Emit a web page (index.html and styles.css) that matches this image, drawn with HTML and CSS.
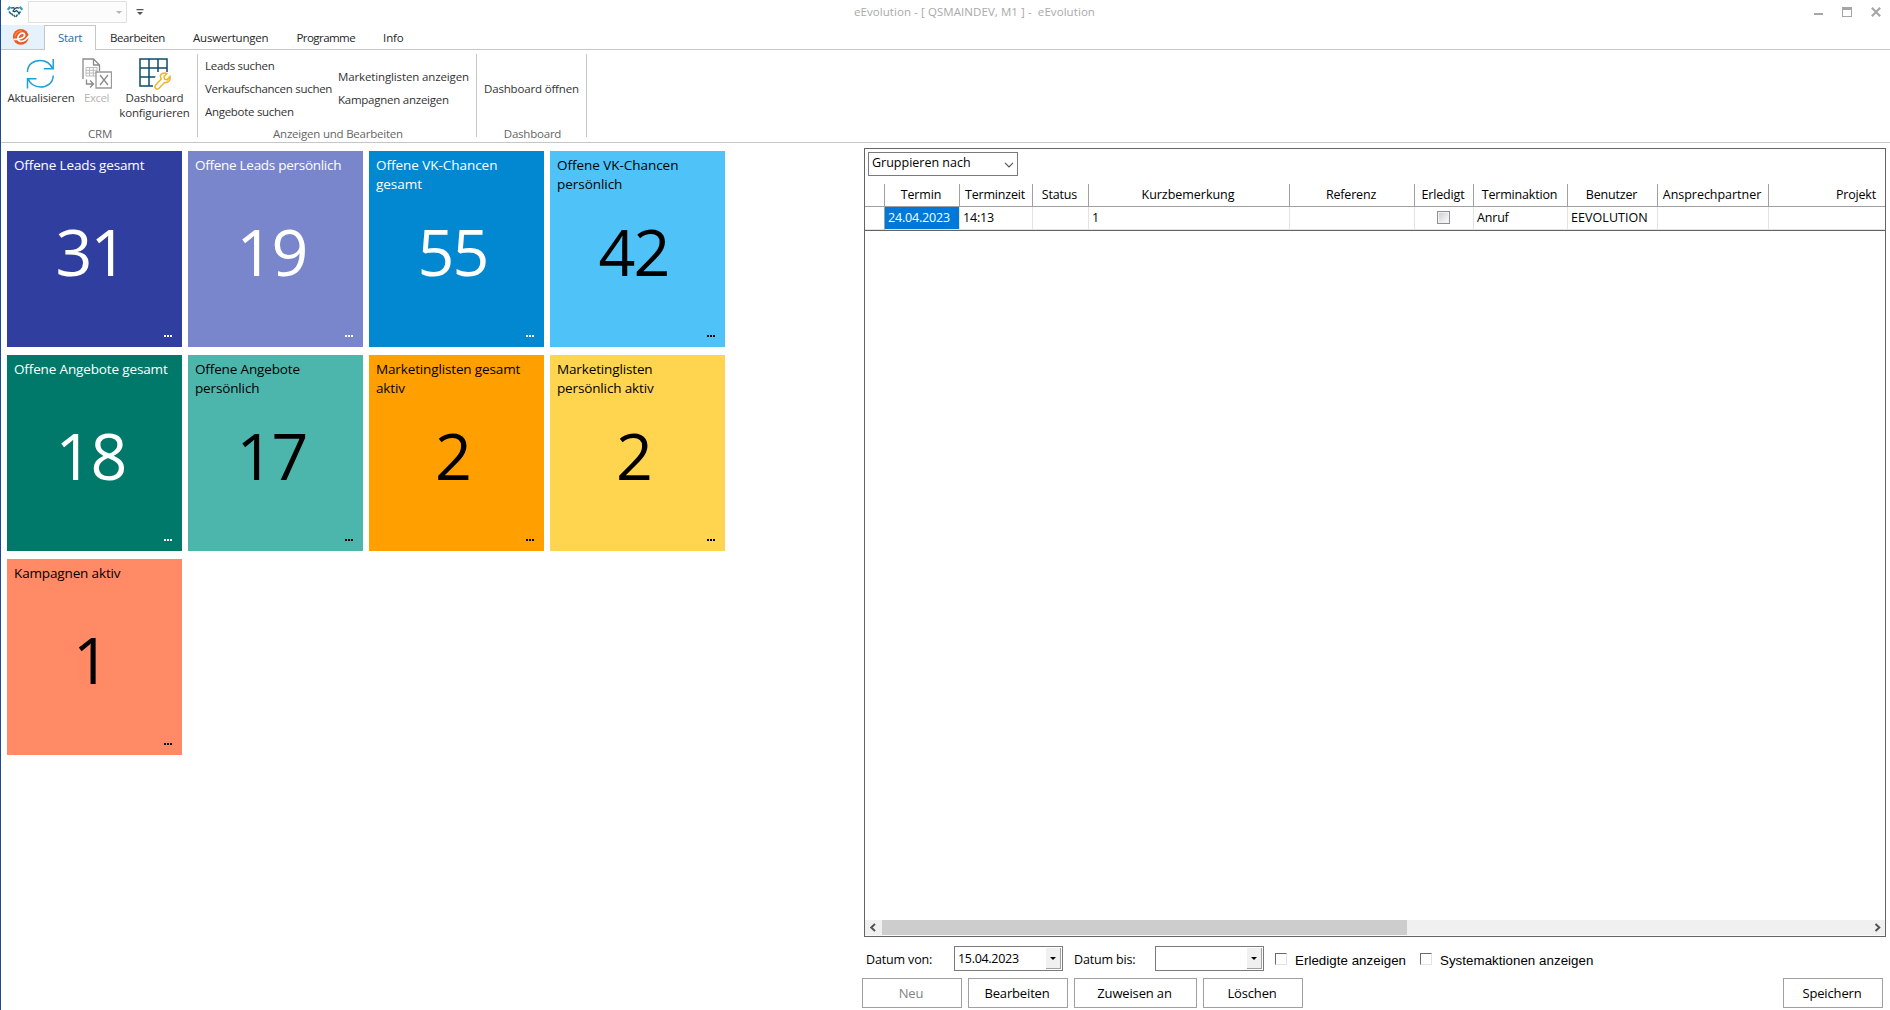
FILE: index.html
```html
<!DOCTYPE html>
<html lang="de">
<head>
<meta charset="utf-8">
<title>eEvolution</title>
<link rel="stylesheet" href="styles.css">
</head>
<body>
<div class="window">
  <header class="titlebar">
    <div class="quick">
      <svg class="app-logo" width="16" height="12" viewBox="0 0 16 12" fill="none">
        <path d="M.8 3.800 3.200.8M15.200 3.800 12.800.8" stroke="#2e9bc4" stroke-width="2.200"/>
        <path d="M3.800 2.200 6.200 1.600 8 2.600 9.800 1.600 12.200 2.200M7.800 2.800 6 5l1.500.8L9.500 4.500 12.500 7.500" stroke="#1c4f66" stroke-width="1.300"/>
        <path d="M2 5.500 4 8M4.500 7.500 6 9.500M6.800 9 8 10.800M13.500 5.500 11.500 8.500M10.500 8.500 9 10.800" stroke="#2a6680" stroke-width="1.500"/>
      </svg>
      <div class="quick-combo"><i class="tri grey"></i></div>
      <svg width="8" height="6" viewBox="0 0 8 6"><path d="M.5 0h7v1.2h-7zM1 3h6L4 6z" fill="#555"/></svg>
    </div>
    <div class="title">eEvolution - [ QSMAINDEV, M1 ] -&nbsp; eEvolution</div>
    <div class="controls">
      <svg width="9" height="10" viewBox="0 0 9 10"><path d="M0 6h9v2H0z" fill="#a6a6a6"/></svg>
      <svg width="10" height="10" viewBox="0 0 10 10"><path d="M0 0h10v10H0zM1 3v6h8V3z" fill="#a6a6a6" fill-rule="evenodd"/></svg>
      <svg width="10" height="10" viewBox="0 0 10 10"><path d="M.8.8 9.2 9.2M9.2.8.8 9.2" stroke="#a6a6a6" stroke-width="2.1"/></svg>
    </div>
  </header>

  <nav class="tabs">
    <div class="app-button">
      <svg width="18" height="18" viewBox="0 0 18 18" fill="none">
        <circle cx="8.800" cy="8.800" r="7.900" fill="#ea5b25"/>
        <path d="M3 8.500C3.500 5 6.500 2.800 9.800 2.800" stroke="#f58a4b" stroke-width="1.500"/>
        <path d="M1.500 11.300C6 11.800 12.600 10.200 12.700 7 12.700 4.700 9.500 4.600 7.600 6.400 5.300 8.600 5 12.300 8 13.200 11 14 14.500 11.500 17 7.800" stroke="#fff" stroke-width="1.700"/>
      </svg>
    </div>
    <div class="tab active">Start</div>
    <div class="tab t-bea">Bearbeiten</div>
    <div class="tab t-aus">Auswertungen</div>
    <div class="tab t-pro">Programme</div>
    <div class="tab">Info</div>
  </nav>

  <section class="ribbon">
    <div class="group crm">
      <div class="tools">
        <div class="tool refresh">
          <svg width="30" height="32" viewBox="0 0 30 32" fill="none" stroke="#1e9fd8" stroke-width="1.5">
            <path d="M2.500 14C2.500 6.500 8.500 2.500 15 2.500 21 2.500 25.500 6 27.500 10.500M28.200 1v9.700h-9.400"/>
            <path d="M28.200 17.500C28.200 25 22 29 15.500 29 9.500 29 5 25.500 3 20.800M2.500 30.500v-9.700h9"/>
          </svg>
          <span class="t-akt">Aktualisieren</span>
        </div>
        <div class="tool narrow off">
          <svg width="30" height="32" viewBox="0 0 30 32" fill="none" stroke="#8a8a8a" stroke-width="1.300">
            <path d="M1 21V1h10.500l6 6v6M11.500 1v6h6"/>
            <path d="M4 9.500h11v8.500H4zM4 12.300h11M4 15.100h11M7.600 9.500V18M11.300 9.500V18" stroke="#bbb" stroke-width="1"/>
            <path d="M4.500 21.500v4.500h6M8 22.500l3.500 3.500L8 29.500"/>
            <path d="M14 14h15.500v16H14z" fill="#fff" stroke="#999"/>
            <path d="M18 17l8 10M26 17l-8 10"/>
          </svg>
          <span class="t-exc">Excel</span>
        </div>
        <div class="tool wide">
          <svg width="32" height="32" viewBox="0 0 32 32" fill="none">
            <path d="M1 1h27v27H1zM10 1v27M19 1v27M1 10h27M1 19h27" stroke="#0d4c68" stroke-width="1.500"/>
            <path d="M18 14h14v18H14v-6z" fill="#fff"/>
            <path d="M21.500 17.500C22 15.300 25.300 14.300 27.800 15.500L25 18.500 25.600 21.200 28.300 21.800 31 18.500C31.800 22.500 29 25.200 25.500 24.500L20 30.300C17.800 32.300 14.500 29.500 16.700 27L22.300 21C21.500 19.800 21.200 18.700 21.500 17.500Z" fill="#fff" stroke="#f0b429" stroke-width="1.500"/>
          </svg>
          <span class="t-das">Dashboard<br>konfigurieren</span>
        </div>
      </div>
      <div class="group-label">CRM</div>
    </div>
    <div class="group search">
      <div class="links">
        <div class="col c1"><span>Leads suchen</span><span>Verkaufschancen suchen</span><span>Angebote suchen</span></div>
        <div class="col c2"><span>Marketinglisten anzeigen</span><span class="t-kam">Kampagnen anzeigen</span></div>
      </div>
      <div class="group-label">Anzeigen und Bearbeiten</div>
    </div>
    <div class="group dash">
      <div class="links"><div class="col c3"><span>Dashboard öffnen</span></div></div>
      <div class="group-label">Dashboard</div>
    </div>
  </section>

  <main class="content">
    <section class="tiles">
      <article class="tile indigo light"><h2>Offene Leads gesamt</h2><strong>31</strong><i class="more"></i></article>
      <article class="tile lavender light"><h2 class="snug">Offene Leads persönlich</h2><strong>19</strong><i class="more"></i></article>
      <article class="tile blue light"><h2>Offene VK-Chancen gesamt</h2><strong>55</strong><i class="more"></i></article>
      <article class="tile sky"><h2>Offene VK-Chancen persönlich</h2><strong>42</strong><i class="more"></i></article>
      <article class="tile green light"><h2>Offene Angebote gesamt</h2><strong>18</strong><i class="more"></i></article>
      <article class="tile teal"><h2>Offene Angebote persönlich</h2><strong>17</strong><i class="more"></i></article>
      <article class="tile orange"><h2>Marketinglisten gesamt aktiv</h2><strong>2</strong><i class="more"></i></article>
      <article class="tile yellow"><h2>Marketinglisten persönlich aktiv</h2><strong>2</strong><i class="more"></i></article>
      <article class="tile coral"><h2>Kampagnen aktiv</h2><strong>1</strong><i class="more"></i></article>
    </section>

    <section class="side">
      <div class="panel">
        <div class="group-by">Gruppieren nach
          <svg width="10" height="6" viewBox="0 0 10 6" fill="none" stroke="#555" stroke-width="1.200"><path d="M1 .8 5 4.800 9 .8"/></svg>
        </div>
        <div class="grid head">
          <div></div><div>Termin</div><div>Terminzeit</div><div>Status</div><div class="wide-sp">Kurzbemerkung</div><div>Referenz</div><div>Erledigt</div><div>Terminaktion</div><div>Benutzer</div><div class="wide-sp">Ansprechpartner</div><div class="last">Projekt</div>
        </div>
        <div class="grid row">
          <div></div><div class="selected">24.04.2023</div><div>14:13</div><div></div><div>1</div><div></div><div class="center"><i class="cell-check"></i></div><div>Anruf</div><div class="user">EEVOLUTION</div><div></div><div></div>
        </div>
        <div class="fill"></div>
        <div class="scroll">
          <svg width="17" height="15" viewBox="0 0 17 15" fill="none" stroke="#505050" stroke-width="1.900"><path d="M10 4 6.200 7.500l3.800 3.500"/></svg>
          <div class="thumb"></div>
          <svg width="17" height="15" viewBox="0 0 17 15" fill="none" stroke="#505050" stroke-width="1.900"><path d="M7.500 4l3.800 3.500L7.500 11"/></svg>
        </div>
      </div>
      <div class="filters">
        <label class="from">Datum von:</label>
        <div class="date">15.04.2023<span><i class="tri"></i></span></div>
        <label class="to">Datum bis:</label>
        <div class="date"><span><i class="tri"></i></span></div>
        <i class="check"></i><label class="opt first">Erledigte anzeigen</label>
        <i class="check"></i><label class="opt">Systemaktionen anzeigen</label>
      </div>
      <div class="actions">
        <button class="off">Neu</button>
        <button>Bearbeiten</button>
        <button class="assign">Zuweisen an</button>
        <button>Löschen</button>
        <button class="save">Speichern</button>
      </div>
    </section>
  </main>
</div>
</body>
</html>
```
FILE: styles.css
```css
* { box-sizing: border-box; }
body { margin: 0; font-family: "Open Sans", "Noto Sans", sans-serif; font-size: 11.5px; color: #262626; background: #fff; }
svg { display: block; flex: none; }
.window { width: 1890px; height: 1010px; overflow: hidden; border-left: 1px solid #1b4a96; display: flex; flex-direction: column; }

/* title bar */
.titlebar { height: 25px; flex: none; display: grid; grid-template-columns: 1fr auto 1fr; }
.quick { display: flex; align-items: flex-start; padding-top: 1px; }
.quick .app-logo { margin: 5px 5px 0 6px; }
.quick-combo { width: 99px; height: 22px; border: 1px solid #e0e0e0; background: #fcfcfc; display: flex; justify-content: flex-end; align-items: center; padding-right: 4px; }
.quick-combo + svg { margin: 8px 0 0 9px; }
.tri { width: 0; height: 0; border: 3px solid transparent; border-top: 3px solid #000; border-bottom: 0; }
.tri.grey { border-top-color: #b5b5b5; }
.title { color: #a9a9a9; line-height: 24px; letter-spacing: .07px; margin: 0 -59px 0 -1px; }
.controls { display: flex; justify-content: flex-end; gap: 19px; padding: 7px 9px 0 0; }

/* tab strip */
.tabs { height: 25px; flex: none; display: flex; border-bottom: 1px solid #c6c6c6; }
.app-button { width: 43px; background: #e5f1fb; padding: 3px 0 0 11px; }
.tab { height: 24px; line-height: 25px; padding: 0 14px; letter-spacing: -.15px; white-space: nowrap; }
.tab.active { width: 52px; height: 25px; background: #fff; border: 1px solid #c6c6c6; border-bottom: 0; padding: 0 0 0 13px; line-height: 24px; color: #2b6cab; letter-spacing: -.3px; }
.t-bea { letter-spacing: -.4px; }
.t-pro { letter-spacing: -.55px; }
.t-aus { letter-spacing: -.2px; }

/* ribbon */
.ribbon { height: 93px; flex: none; display: flex; border-bottom: 1px solid #c6c6c6; padding: 4px 0 5px; color: #333; }
.group { border-right: 1px solid #c6c6c6; display: flex; flex-direction: column; justify-content: space-between; }
.group-label { text-align: center; color: #666; line-height: 16px; letter-spacing: -.22px; margin: 0 -2px -5px 0; }
.crm { width: 197px; }
.tools { display: flex; padding: 4px 0 0 2px; }
.tool { display: flex; flex-direction: column; align-items: center; text-align: center; line-height: 15px; }
.tool.wide { width: 77px; }
.tool.refresh { width: 77px; padding-right: 1px; }
.tool.refresh svg { margin-left: -2px; }
.tool.narrow { width: 36px; }
.tool.narrow svg, .tool.narrow span { margin-left: -3px; }
.tool.off { color: #b5b5b5; }
.t-akt { letter-spacing: -.2px; }
.t-das { letter-spacing: -.15px; }
.t-exc { letter-spacing: -.5px; }
.search { width: 279px; }
.dash { width: 110px; }
.links { display: flex; height: 68px; padding: 0 0 0 7px; align-items: center; }
.col { display: flex; flex-direction: column; line-height: 23px; white-space: nowrap; letter-spacing: -.29px; }
.c1 { width: 133px; }
.c2 { letter-spacing: -.13px; }
.t-kam { letter-spacing: -.25px; }
.c3 { letter-spacing: -.17px; }

/* dashboard tiles */
.content { flex: 1; min-height: 0; display: flex; justify-content: space-between; }
.tiles { display: grid; grid-template-columns: repeat(4, 175px); grid-auto-rows: 196px; gap: 8px 6px; padding: 8px 0 0 6px; align-content: start; }
.tile { padding: 5px 7px; color: #000; position: relative; }
.tile.light { color: #fff; }
.tile h2 { margin: 0; height: 58px; font-weight: 400; font-size: 13.5px; line-height: 19px; letter-spacing: -.14px; }
.blue h2, .sky h2 { letter-spacing: -.04px; }
.tile h2.snug { letter-spacing: -.28px; white-space: nowrap; }
.tile strong { display: block; font-weight: 400; font-size: 64.5px; line-height: 74px; text-align: center; letter-spacing: -2px; margin-right: 8px; }
.more { position: absolute; right: 10px; bottom: 10px; width: 8px; height: 2px; background: repeating-linear-gradient(90deg, currentColor 0 2px, transparent 2px 3px); }
.indigo { background: #303f9f; }
.lavender { background: #7986cb; }
.blue { background: #0288d1; }
.sky { background: #4fc3f7; }
.green { background: #00796b; }
.teal { background: #4db6ac; }
.orange { background: #ffa000; }
.yellow { background: #ffd54f; }
.coral { background: #ff8a65; }

/* appointment list */
.side { width: 1028px; padding-top: 5px; color: #000; font-size: 12.5px; }
.panel { margin: 0 4px 0 2px; height: 789px; border: 1px solid #646464; display: flex; flex-direction: column; }
.group-by { width: 150px; height: 24px; margin: 3px 0 8px 3px; border: 1px solid #7a7a7a; padding: 0 3px 2px; display: flex; justify-content: space-between; align-items: center; line-height: 20px; }
.group-by svg { margin-top: 4px; }
.grid { display: grid; grid-template-columns: 20px 75px 73px 56px 201px 125px 59px 94px 90px 111px 1fr; letter-spacing: -.18px; white-space: nowrap; }
.grid > div { border-right: 1px solid #a0a0a0; overflow: hidden; }
.grid > div:last-child { border-right: 0; }
.grid > .wide-sp { letter-spacing: -.03px; }
.grid > .user { letter-spacing: .06px; }
.head { height: 23px; text-align: center; line-height: 22px; border-bottom: 1px solid #a0a0a0; }
.head > div { padding-right: 2px; }
.head .last { text-align: right; padding-right: 9px; }
.row { height: 24px; line-height: 21px; border-bottom: 1px solid #646464; }
.row > div { padding-left: 3px; border-right-color: #e3e3e3; border-bottom: 1px solid #e3e3e3; }
.row > div:first-child { border-right-color: #a0a0a0; }
.row > .selected { background: #0078d7; color: #fff; }
.row > .center { display: flex; justify-content: center; padding: 4px 2px 0 0; }
.cell-check { width: 13px; height: 13px; border: 1px solid #8e8f8f; background: linear-gradient(135deg, #c9ccd0, #fff) padding-box; box-shadow: inset 0 0 0 1px #f2f2f2; }
.fill { flex: 1; }
.scroll { height: 16px; background: #f0f0f0; display: flex; border-bottom: 1px solid #fafafa; }
.thumb { width: 525px; background: #cdcdcd; margin-right: auto; }

/* filter bar */
.filters { display: flex; padding: 9px 0 0 4px; line-height: 27px; letter-spacing: -.15px; height: 41px; }
.from { width: 88px; }
.to { width: 81px; }
.date { width: 109px; height: 25px; border: 1px solid #7a7a7a; padding: 1px 1px 1px 3px; line-height: 22px; display: flex; justify-content: space-between; letter-spacing: -.3px; margin-right: 11px; }
.to + .date { margin-right: 11px; }
.date span { margin-left: auto; width: 15px; height: 21px; background: #f0f0f0; border-right: 1px solid #a0a0a0; border-bottom: 1px solid #a0a0a0; display: flex; align-items: center; justify-content: center; }
.check { width: 12px; height: 12px; margin: 7px 8px 0 0; border: 1px solid #e3e3e3; border-top-color: #696969; border-left-color: #696969; }
.opt { font: 13.3px/29px "Liberation Sans", sans-serif; letter-spacing: .05px; white-space: nowrap; }
.opt.first { width: 125px; }

/* action buttons */
.actions { display: flex; gap: 6px; }
.actions button { width: 100px; height: 30px; border: 1px solid #a0a0a0; background: #fff; font: 13px "Open Sans", sans-serif; letter-spacing: -.15px; color: #000; padding: 0 2px 1px 0; }
.actions .off { color: #838383; }
.actions .assign { width: 123px; }
.actions .save { margin: 0 7px 0 auto; }
```
